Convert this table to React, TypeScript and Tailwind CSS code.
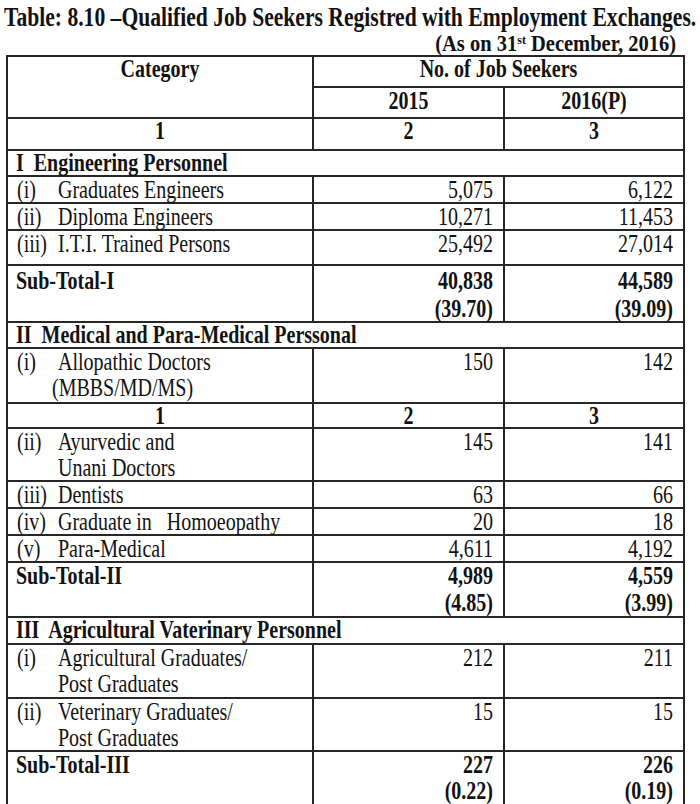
import React from "react";

type Item = { prefix: string; lines: string[]; a: string; b: string; h: string; cont?: string };

const itemsI: Item[] = [
  { prefix: "(i)", lines: ["Graduates Engineers"], a: "5,075", b: "6,122", h: "h-[25px]" },
  { prefix: "(ii)", lines: ["Diploma Engineers"], a: "10,271", b: "11,453", h: "h-[25px]" },
  { prefix: "(iii)", lines: ["I.T.I. Trained Persons"], a: "25,492", b: "27,014", h: "h-[33px]" },
];

const itemsII: Item[] = [
  { prefix: "(ii)", lines: ["Ayurvedic and", "Unani Doctors"], a: "145", b: "141", h: "h-[51px]" },
  { prefix: "(iii)", lines: ["Dentists"], a: "63", b: "66", h: "h-[25px]" },
  { prefix: "(iv)", lines: ["Graduate in\u00a0\u00a0 Homoeopathy"], a: "20", b: "18", h: "h-[25px]" },
  { prefix: "(v)", lines: ["Para-Medical"], a: "4,611", b: "4,192", h: "h-[25px]" },
];

const itemsIII: Item[] = [
  { prefix: "(i)", lines: ["Agricultural Graduates/", "Post Graduates"], a: "212", b: "211", h: "h-[52px]" },
  { prefix: "(ii)", lines: ["Veterinary Graduates/", "Post Graduates"], a: "15", b: "15", h: "h-[51px]" },
];

const td = "border-2 border-[#262626] align-top p-0";

function T({ children }: { children: React.ReactNode }) {
  return <span className="inline-block scale-y-[1.25] -translate-y-px whitespace-pre">{children}</span>;
}

function ItemRow({ it }: { it: Item }) {
  return (
    <tr>
      <td className={td}>
        <div className={`${it.h} pl-[9px] leading-[26px]`}>
          <div className="flex">
            <span className="w-[41px] shrink-0">
              <T>{it.prefix}</T>
            </span>
            <T>{it.lines[0]}</T>
          </div>
          {it.lines.slice(1).map((l) => (
            <div key={l} className={it.cont ?? "pl-[41px]"}>
              <T>{l}</T>
            </div>
          ))}
        </div>
      </td>
      <td className={td}>
        <div className={`${it.h} text-right pr-[10px] leading-[26px]`}>
          <T>{it.a}</T>
        </div>
      </td>
      <td className={td}>
        <div className={`${it.h} text-right pr-[10px] leading-[26px]`}>
          <T>{it.b}</T>
        </div>
      </td>
    </tr>
  );
}

function Section({ text, h }: { text: string; h: string }) {
  return (
    <tr>
      <td colSpan={3} className={td}>
        <div className={`${h} pl-[8px] font-bold leading-[24px]`}>
          <T>{text}</T>
        </div>
      </td>
    </tr>
  );
}

function Sub({
  label,
  a,
  b,
  pa,
  pb,
  h,
  lead,
}: {
  label: string;
  a: string;
  b: string;
  pa: string;
  pb: string;
  h: string;
  lead: string;
}) {
  return (
    <tr>
      <td className={td}>
        <div className={`${h} ${lead} pl-[8px] font-bold`}>
          <T>{label}</T>
        </div>
      </td>
      <td className={td}>
        <div className={`${h} ${lead} text-right pr-[10px] font-bold`}>
          <div>
            <T>{a}</T>
          </div>
          <div>
            <T>{pa}</T>
          </div>
        </div>
      </td>
      <td className={td}>
        <div className={`${h} ${lead} text-right pr-[10px] font-bold`}>
          <div>
            <T>{b}</T>
          </div>
          <div>
            <T>{pb}</T>
          </div>
        </div>
      </td>
    </tr>
  );
}

function Nums({ h, lead }: { h: string; lead: string }) {
  return (
    <tr>
      {["1", "2", "3"].map((n) => (
        <td key={n} className={td}>
          <div className={`${h} ${lead} text-center font-bold`}>
            <T>{n}</T>
          </div>
        </td>
      ))}
    </tr>
  );
}

export default function App() {
  return (
    <div
      className="w-[700px] h-[804px] overflow-hidden bg-white text-[#121212]"
      style={{ fontFamily: '"Liberation Serif", "Times New Roman", serif' }}
    >
      <div className="pl-[4px] pt-[6px] text-[21.6px] leading-[24px] font-bold whitespace-nowrap">
        <T>Table: 8.10 –Qualified Job Seekers Registred with Employment Exchanges.</T>
      </div>
      <div className="h-[22px] text-right pr-[24px] text-[20.5px] leading-[22px] font-bold mt-[2px] mb-[1px] whitespace-nowrap">
        <span className="inline-block scale-y-[1.1]">
          (As on 31<sup className="text-[12px] leading-none">st</sup> December, 2016)
        </span>
      </div>
      <table className="ml-[6px] border-collapse table-fixed w-[677px] text-[20px]">
        <colgroup>
          <col className="w-[306px]" />
          <col className="w-[191px]" />
          <col className="w-[180px]" />
        </colgroup>
        <tbody>
          <tr>
            <td rowSpan={2} className={td}>
              <div className="text-center font-bold leading-[21px] pt-[2px]">
                <T>Category</T>
              </div>
            </td>
            <td colSpan={2} className={td}>
              <div className="h-[29px] text-center font-bold leading-[21px] pt-[2px]">
                <T>No. of Job Seekers</T>
              </div>
            </td>
          </tr>
          <tr>
            <td className={td}>
              <div className="h-[29px] text-center font-bold leading-[26px]">
                <T>2015</T>
              </div>
            </td>
            <td className={td}>
              <div className="h-[29px] text-center font-bold leading-[26px]">
                <T>2016(P)</T>
              </div>
            </td>
          </tr>
          <Nums h="h-[30px]" lead="leading-[25px]" />
          <Section text="I  Engineering Personnel" h="h-[24px]" />
          {itemsI.map((it) => (
            <ItemRow key={it.prefix + it.lines[0]} it={it} />
          ))}
          <Sub
            label="Sub-Total-I"
            a="40,838"
            b="44,589"
            pa="(39.70)"
            pb="(39.09)"
            h="h-[55px]"
            lead="leading-[28px] pt-[1px]"
          />
          <Section text="II  Medical and Para-Medical Perssonal" h="h-[24px]" />
          <ItemRow
            it={{
              prefix: "(i)",
              lines: ["Allopathic Doctors", "(MBBS/MD/MS)"],
              a: "150",
              b: "142",
              h: "h-[53px]",
              cont: "pl-[35px]",
            }}
          />
          <Nums h="h-[23px]" lead="leading-[24px]" />
          {itemsII.map((it) => (
            <ItemRow key={it.prefix + it.lines[0]} it={it} />
          ))}
          <Sub
            label="Sub-Total-II"
            a="4,989"
            b="4,559"
            pa="(4.85)"
            pb="(3.99)"
            h="h-[53px]"
            lead="leading-[27px]"
          />
          <Section text="III  Agricultural Vaterinary Personnel" h="h-[25px]" />
          {itemsIII.map((it) => (
            <ItemRow key={it.prefix + it.lines[0]} it={it} />
          ))}
          <Sub
            label="Sub-Total-III"
            a="227"
            b="226"
            pa="(0.22)"
            pb="(0.19)"
            h="h-[53px]"
            lead="leading-[26px]"
          />
        </tbody>
      </table>
    </div>
  );
}
